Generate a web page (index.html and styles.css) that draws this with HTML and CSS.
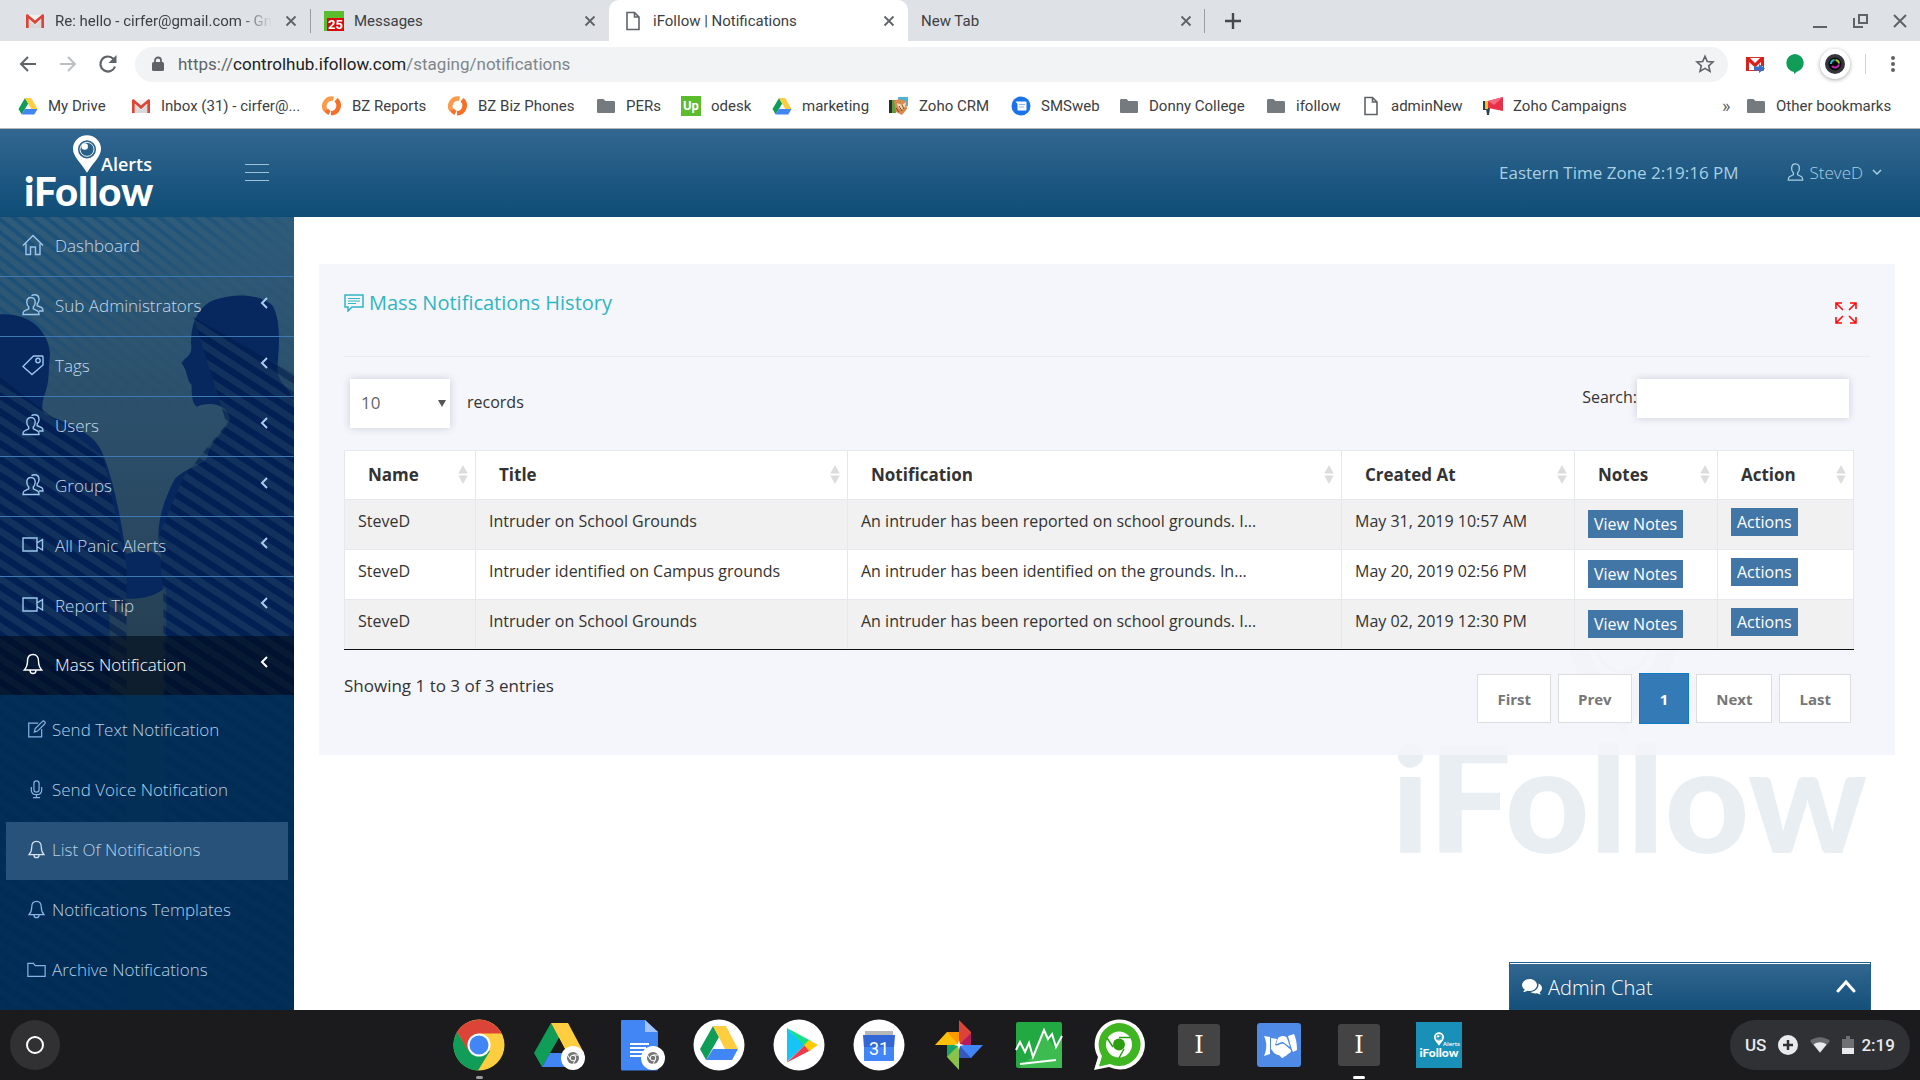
FILE: index.html
```html
<!DOCTYPE html>
<html lang="en">
<head>
<meta charset="utf-8">
<title>iFollow | Notifications</title>
<link rel="stylesheet" href="styles.css">
</head>
<body>
<svg class="defs" aria-hidden="true">
  <defs>
    <symbol id="gmail" viewBox="0 0 20 20"><path fill="#f1f1f1" d="M2 4h16v13H2z"/><path fill="#d9d9d9" d="M4 9l6 5 6-5v8H4z"/><path fill="#db4437" d="M1 17V4.500C1 3.500 2.500 3 3.300 3.700L10 9.600l6.700-5.900C17.500 3 19 3.500 19 4.500V17h-2.700V7.600L10 13.200 3.700 7.600V17z"/></symbol>
    <symbol id="drive" viewBox="0 0 20 20"><path fill="#0f9d58" d="M7 2L.5 13l3.200 5.500L10.200 7.500z"/><path fill="#ffcd40" d="M7 2h6.200l6.300 11h-6.300z"/><path fill="#4285f4" d="M7 13h12.500l-3.200 5.500H3.700z"/></symbol>
    <symbol id="close" viewBox="0 0 20 20"><path d="M5 5l10 10M15 5L5 15" stroke="currentColor" stroke-width="2"/></symbol>
    <symbol id="page" viewBox="0 0 20 20"><path d="M4 1.500h7.500L16 6v12.500H4zM11.500 1.500V6H16" fill="none" stroke="#5f6368" stroke-width="1.600"/></symbol>
    <symbol id="folder" viewBox="0 0 20 20"><path fill="#757a7e" d="M1 4.500C1 3.700 1.500 3 2.300 3h5.200l2 2h8.200c.8 0 1.300.6 1.300 1.300v9.400c0 .8-.5 1.300-1.300 1.300H2.300C1.500 17 1 16.500 1 15.700z"/></symbol>
    <symbol id="bz" viewBox="0 0 20 20"><path d="M3.600 14.500A7.700 7.700 0 0 1 11.500 2.700" fill="none" stroke="#fb9a4b" stroke-width="4.600"/><path d="M14 3.800A7.700 7.700 0 0 1 9 17.300M7.500 17A7.500 7.500 0 0 1 4.200 13.800" fill="none" stroke="#f6702a" stroke-width="4.600"/></symbol>
    <symbol id="users" viewBox="0 0 22 22"><path d="M9 3.500c-3 0-4.200 2.200-4.200 4.800 0 1.700.8 3.600 1.900 4.600v2L2.200 17c-.8.500-1.200 1.200-1.200 3.500h16c0-2.300-.4-3-1.200-3.500l-4.500-2.100v-2c1.100-1 1.900-2.900 1.900-4.600 0-2.600-1.200-4.800-4.200-4.800z"/><path d="M9.500 1.800C10.300 1 11.300.7 12.500.7c3 0 4.500 2.200 4.500 4.700 0 1.800-.8 3.300-1.800 4.300v2l4.500 2c1 .6 1.300 1.500 1.300 3.300h-4"/></symbol>
    <symbol id="user" viewBox="0 0 18 20"><path d="M9 1C6 1 4.700 3.200 4.700 6c0 1.900.8 4 2 5.100V13l-4.500 2.300C1.300 15.900 1 16.800 1 19h16c0-2.200-.3-3.100-1.200-3.700L11.300 13v-1.900c1.200-1.100 2-3.200 2-5.100C13.300 3.200 12 1 9 1z"/></symbol>
    <symbol id="camera" viewBox="0 0 22 22"><path d="M1 4h14v13H1zM15 9l5.500-3.500v10.500L15 12.500"/></symbol>
    <symbol id="bell" viewBox="0 0 22 22"><path d="M11 1.500c-3.800 0-5.500 3-5.500 6.500 0 5-1.200 6.800-3.200 9h17.400c-2-2.200-3.200-4-3.200-9 0-3.500-1.700-6.500-5.500-6.500zM8 17.300c0 1.900 1.200 3.200 3 3.200s3-1.300 3-3.200"/></symbol>
    <symbol id="home" viewBox="0 0 22 22"><path d="M1 11.500L11 1.500l10 10M4 9.500v11h4.500V13h5v7.500H18v-11"/></symbol>
    <symbol id="tag" viewBox="0 0 22 22"><path d="M1 12.500L11.500 2H20.500l.5 1v8L10 20.500z"/><circle cx="16" cy="6.500" r="2.200"/></symbol>
    <symbol id="edit" viewBox="0 0 22 22"><path d="M13 3.500H2v16h15v-9M8.500 14l1-4 8.200-8.200c.8-.8 2-.6 2.700.1s.8 1.900 0 2.700L12.200 12.800z"/></symbol>
    <symbol id="mic" viewBox="0 0 22 22"><rect x="8" y="1" width="6" height="13" rx="3"/><path d="M5 8v3.500c0 3.500 2.500 5.500 6 5.500s6-2 6-5.500V8M11 17v3.500M7 20.500h8"/></symbol>
    <symbol id="outline-folder" viewBox="0 0 22 22"><path d="M1 4h6.500l2 2.500H21V19H1z"/></symbol>
    <symbol id="chevron-left" viewBox="0 0 10 14"><path d="M8 2L3 7l5 5"/></symbol>
    <symbol id="sort" viewBox="0 0 10 20"><path fill="#dcdcdc" d="M5 0l5 9H0zM5 20l5-9H0z"/></symbol>
    <symbol id="pin" viewBox="0 0 30 40"><path fill="currentColor" fill-rule="evenodd" d="M15 0C6.700 0 0 6.500 0 14.500 0 23 8 29 15 40c7-11 15-17 15-25.500C30 6.500 23.300 0 15 0zm0 5.300a9.700 9.700 0 1 1 0 19.400 9.700 9.700 0 0 1 0-19.400z"/><circle cx="15" cy="15" r="7.500" fill="none" stroke="currentColor"/><circle cx="12.500" cy="12" r="3.500" fill="currentColor"/></symbol>
    <symbol id="badge" viewBox="0 0 24 24"><circle cx="12" cy="12" r="12" fill="#fff"/><circle cx="12" cy="12" r="6" fill="#757575"/><circle cx="12" cy="12" r="2.800" fill="#757575" stroke="#fff"/><path d="M12 9h5.500M9.300 13.500l-2.800-4.500M14.500 13.500l-2.500 4.500" stroke="#fff"/></symbol>
    <pattern id="blinds" width="40" height="40" patternUnits="userSpaceOnUse" patternTransform="rotate(33)"><rect width="40" height="20" fill="#001b4c" opacity=".75"/><rect y="20" width="40" height="20" fill="#1c3d5c" opacity=".6"/></pattern>
    <pattern id="facade" width="30" height="30" patternUnits="userSpaceOnUse" patternTransform="rotate(38)"><rect width="30" height="12" fill="#0d4a7c" opacity=".6"/></pattern>
    <linearGradient id="sky" x2="0" y2="1"><stop offset="0" stop-color="#2f5c7a"/><stop offset=".4" stop-color="#2a4861"/><stop offset=".6" stop-color="#233c4c"/><stop offset="1" stop-color="#0e2f4d"/></linearGradient>
    <linearGradient id="fade" x2="1" y2="1"><stop offset="0" stop-color="#fff"/><stop offset=".35" stop-color="#fff" stop-opacity=".7"/><stop offset=".55" stop-color="#fff" stop-opacity=".1"/></linearGradient>
    <mask id="facade-mask"><path fill="url(#fade)" d="M0 0h882v560H0z"/></mask>
  </defs>
</svg>

<div class="window">
  <header class="tabs">
    <div class="tab"><svg class="ico"><use href="#gmail"/></svg><span class="tab-title tab-title-fade">Re: hello - cirfer@gmail.com - Gmail</span><button class="x" aria-label="Close tab"><svg><use href="#close"/></svg></button></div>
    <div class="tab tab-line"><span class="count">25</span><span class="tab-title">Messages</span><button class="x" aria-label="Close tab"><svg><use href="#close"/></svg></button></div>
    <div class="tab tab-active"><svg class="ico"><use href="#page"/></svg><span class="tab-title">iFollow | Notifications</span><button class="x" aria-label="Close tab"><svg><use href="#close"/></svg></button></div>
    <div class="tab tab-plain"><span class="tab-title">New Tab</span><button class="x" aria-label="Close tab"><svg><use href="#close"/></svg></button></div>
    <button class="new-tab" aria-label="New tab"><svg viewBox="0 0 16 16"><path d="M8 0v16M0 8h16" stroke="#45494d" stroke-width="2.400"/></svg></button>
    <div class="controls">
      <button aria-label="Minimize"><svg viewBox="0 0 20 20"><path d="M3 16h14" stroke="#5f6368" stroke-width="2"/></svg></button>
      <button aria-label="Restore"><svg viewBox="0 0 20 20"><path d="M9 4h8v8H9zM4 7v9h9" fill="none" stroke="#5f6368" stroke-width="2"/></svg></button>
      <button aria-label="Close window"><svg viewBox="0 0 20 20"><path d="M4 4l12 12M16 4L4 16" stroke="#5f6368" stroke-width="2"/></svg></button>
    </div>
  </header>

  <div class="toolbar">
    <button aria-label="Back"><svg viewBox="0 0 20 20"><path d="M18 10H3M10 3l-7 7 7 7" fill="none" stroke="#5f6368" stroke-width="2"/></svg></button>
    <button aria-label="Forward"><svg viewBox="0 0 20 20"><path d="M2 10h15M10 3l7 7-7 7" fill="none" stroke="#bdc0c3" stroke-width="2"/></svg></button>
    <button aria-label="Reload"><svg viewBox="0 0 20 20"><path d="M17 12.500A7.500 7.500 0 1 1 15.500 5" fill="none" stroke="#5f6368" stroke-width="2.200"/><path d="M18.500 1v8h-8z" fill="#5f6368"/></svg></button>
    <div class="omnibox">
      <svg class="lock" viewBox="0 0 12 16"><path d="M3 7V4.500a3 3 0 0 1 6 0V7" fill="none" stroke="#5f6368" stroke-width="1.800"/><rect y="6" width="12" height="9" rx="1.500" fill="#5f6368"/></svg>
      <p class="url">https://<b>controlhub.ifollow.com</b><span>/staging/notifications</span></p>
      <button aria-label="Bookmark"><svg viewBox="0 0 20 20"><path d="M10 2.200l2.300 5.300 5.700.5-4.300 3.800 1.300 5.600-5-3-5 3 1.300-5.600L2 8l5.700-.5z" fill="none" stroke="#5f6368" stroke-width="1.600"/></svg></button>
    </div>
    <div class="extensions">
      <svg viewBox="0 0 20 20"><path fill="#fff" stroke="#c33" d="M1.500 3.500h17v13h-17z"/><path fill="#d9201a" d="M1 17V3h3l6 6 6-6h3v9h-3V8l-6 5.500L4 8v9z"/><path fill="#3a6fc9" d="M9 12.500h5V10l6 4.500-6 4.500v-2.500H9z"/></svg>
      <svg viewBox="0 0 20 20"><path fill="#0f9d58" d="M10 0a9 9 0 0 0-1 17.900V20l3-2.300A9 9 0 0 0 10 0z"/></svg>
      <svg class="avatar" viewBox="0 0 30 30"><circle cx="15" cy="15" r="15" fill="#fff"/><circle cx="15" cy="15" r="10" fill="#35363d"/><circle cx="15" cy="15" r="6.500" fill="#08080b"/><path d="M11 15a4 4 0 0 1 3.500-4" fill="none" stroke="#22b8c9" stroke-width="2"/><path d="M15.500 11a4 4 0 0 1 3.500 3.500" fill="none" stroke="#9ec928" stroke-width="2"/><path d="M19 15.500a4 4 0 0 1-7 1.500" fill="none" stroke="#c42cb0" stroke-width="2"/></svg>
      <button class="more" aria-label="Menu"><svg viewBox="0 0 20 20"><g fill="#5f6368"><circle cx="10" cy="4" r="2"/><circle cx="10" cy="10" r="2"/><circle cx="10" cy="16" r="2"/></g></svg></button>
    </div>
  </div>

  <nav class="bookmarks" aria-label="Bookmarks">
    <a href="#"><svg><use href="#drive"/></svg>My Drive</a>
    <a href="#"><svg><use href="#gmail"/></svg>Inbox (31) - cirfer@...</a>
    <a href="#"><svg><use href="#bz"/></svg>BZ Reports</a>
    <a href="#"><svg><use href="#bz"/></svg>BZ Biz Phones</a>
    <a href="#"><svg><use href="#folder"/></svg>PERs</a>
    <a href="#"><span class="up">Up</span>odesk</a>
    <a href="#"><svg><use href="#drive"/></svg>marketing</a>
    <a href="#"><svg viewBox="0 0 20 20"><path fill="#5e9f3c" d="M0 4h7v13H0z"/><path fill="#2b2b2b" d="M0 4h3v13H0z"/><path fill="#4bb3d8" d="M9 1h10v9h-9z"/><path fill="#d98a52" d="M5 5l5-2 7 2 1 8-5 6-6-3z"/><path fill="#f4d9b5" d="M8 7l5 2 4-3-1 5-4 3-3-3z"/><path stroke="#7d3d1f" d="M7 12l3 4M10 10l3 5M13 9l2 4"/></svg>Zoho CRM</a>
    <a href="#"><svg viewBox="0 0 20 20"><circle cx="10" cy="10" r="9.500" fill="#1a73e8"/><path fill="#fff" d="M4.500 5.500h10c.8 0 1 .4 1 1v7c0 .6-.3 1-1 1h-7c-.7 0-1-.4-1-1V8z"/><path stroke="#8ab4f8" d="M8 8.500h6M8 11h5"/></svg>SMSweb</a>
    <a href="#"><svg><use href="#folder"/></svg>Donny College</a>
    <a href="#"><svg><use href="#folder"/></svg>ifollow</a>
    <a href="#"><svg><use href="#page"/></svg>adminNew</a>
    <a href="#"><svg viewBox="0 0 20 20"><path fill="#2d3e50" d="M0 5h3v9H0zM3 12h4l-1 7H4z"/><path fill="#f5c518" d="M2 5h3v8H2z"/><path fill="#e8304a" d="M5 5l15-4v14L5 12z"/><path fill="#f4697b" d="M5 5l15-4-9 8z"/></svg>Zoho Campaigns</a>
    <button class="overflow" aria-label="More bookmarks">»</button>
    <a href="#"><svg><use href="#folder"/></svg>Other bookmarks</a>
  </nav>

  <div class="app">
    <header class="topbar">
      <a href="#" class="logo" aria-label="iFollow Alerts">
        <span class="logo-top"><svg class="logo-pin"><use href="#pin"/></svg>Alerts</span>
        <span class="logo-word">iFollow</span>
      </a>
      <button class="burger" aria-label="Toggle menu"><i></i><i></i><i></i></button>
      <p class="clock">Eastern Time Zone 2:19:16 PM</p>
      <button class="account"><svg class="line"><use href="#user"/></svg>SteveD<svg class="caret" viewBox="0 0 10 10"><path d="M1 3l4 4 4-4" fill="none" stroke="currentColor" stroke-width="1.500"/></svg></button>
    </header>

    <div class="body">
      <aside class="sidebar">
        <svg class="scene" viewBox="0 0 882 2379" preserveAspectRatio="xMidYMin slice" aria-hidden="true">
          <rect width="882" height="2379" fill="url(#sky)"/>
          <rect width="882" height="560" fill="url(#facade)" mask="url(#facade-mask)"/>
          <path fill="#07285f" d="M0 292c90-5 145 50 150 118-6 50 0 70-12 110-10 30-16 50-6 70 100 40 160 65 180 130 30 80 50 180 66 290l60-10c60 10 70 60 60 110-40 40-120 40-170 30l5 1229H0z"/>
          <path fill="#07285f" d="M640 250c80-30 160-10 180 20 20 40 20 100 12 180-2 60 50 60 50 120v1800H490c0-400 5-1000 10-1230l-25-180c0-60 20-120 50-175 50-45 100-40 100-80 15-40 50-60 65-100-10-50-70-50-100-36-15-10-15-40-15-65-15-10-10-40-30-65 10-20 35-20 28-60 0-80 35-115 67-129z"/>
          <path fill="url(#blinds)" opacity=".8" d="M0 480l130 100 180 140 70 330v1329H0zM580 300l302 170v1909H490V1140L475 960l75-180 130-160z"/>
        </svg>
        <nav class="menu">
          <a href="#"><svg class="line"><use href="#home"/></svg>Dashboard</a>
          <a href="#"><svg class="line"><use href="#users"/></svg>Sub Administrators<svg class="arrow"><use href="#chevron-left"/></svg></a>
          <a href="#"><svg class="line"><use href="#tag"/></svg>Tags<svg class="arrow"><use href="#chevron-left"/></svg></a>
          <a href="#"><svg class="line"><use href="#users"/></svg>Users<svg class="arrow"><use href="#chevron-left"/></svg></a>
          <a href="#"><svg class="line"><use href="#users"/></svg>Groups<svg class="arrow"><use href="#chevron-left"/></svg></a>
          <a href="#"><svg class="line"><use href="#camera"/></svg>All Panic Alerts<svg class="arrow"><use href="#chevron-left"/></svg></a>
          <a href="#" class="last"><svg class="line"><use href="#camera"/></svg>Report Tip<svg class="arrow"><use href="#chevron-left"/></svg></a>
          <a href="#" class="open"><svg class="line"><use href="#bell"/></svg>Mass Notification<svg class="arrow"><use href="#chevron-left"/></svg></a>
        </nav>
        <nav class="submenu">
          <a href="#"><svg class="line"><use href="#edit"/></svg>Send Text Notification</a>
          <a href="#"><svg class="line"><use href="#mic"/></svg>Send Voice Notification</a>
          <a href="#" class="current"><svg class="line"><use href="#bell"/></svg>List Of Notifications</a>
          <a href="#"><svg class="line"><use href="#bell"/></svg>Notifications Templates</a>
          <a href="#"><svg class="line"><use href="#outline-folder"/></svg>Archive Notifications</a>
        </nav>
      </aside>

      <main class="content">
        <div class="watermark" aria-hidden="true">
          <span class="mark-top"><svg class="mark-pin"><use href="#pin"/></svg>Alerts</span>
          <span class="mark-word">iFollow</span>
        </div>
        <section class="panel">
          <div class="panel-head">
            <h1><svg viewBox="0 0 20 18"><path d="M1 1h18v12H8l-4 4v-4H1z" fill="none" stroke="currentColor" stroke-width="1.500"/><path d="M4 4.500h12M4 7h12M4 9.500h8" stroke="currentColor"/></svg>Mass Notifications History</h1>
            <button class="expand" aria-label="Full screen"><svg viewBox="0 0 22 22"><path d="M1 7V1h6M1 1l7 7M15 1h6v6M21 1l-7 7M1 15v6h6M1 21l7-7M15 21h6v-6M21 21l-7-7" fill="none" stroke="#fb0d0d" stroke-width="1.600"/></svg></button>
          </div>
          <div class="filters">
            <div class="length"><span class="select"><select id="length"><option>10</option><option>25</option></select></span><label for="length">records</label></div>
            <div class="search"><label for="search">Search:</label><input id="search" type="text"></div>
          </div>
          <table>
            <colgroup><col class="c-name"><col class="c-title"><col><col class="c-date"><col class="c-notes"><col class="c-action"></colgroup>
            <thead><tr>
              <th><span>Name<svg><use href="#sort"/></svg></span></th>
              <th><span>Title<svg><use href="#sort"/></svg></span></th>
              <th><span>Notification<svg><use href="#sort"/></svg></span></th>
              <th><span>Created At<svg><use href="#sort"/></svg></span></th>
              <th><span>Notes<svg><use href="#sort"/></svg></span></th>
              <th><span>Action<svg><use href="#sort"/></svg></span></th>
            </tr></thead>
            <tbody>
              <tr><td>SteveD</td><td>Intruder on School Grounds</td><td>An intruder has been reported on school grounds. I...</td><td>May 31, 2019 10:57 AM</td><td><button>View Notes</button></td><td class="action"><button>Actions</button></td></tr>
              <tr><td>SteveD</td><td>Intruder identified on Campus grounds</td><td>An intruder has been identified on the grounds. In...</td><td>May 20, 2019 02:56 PM</td><td><button>View Notes</button></td><td class="action"><button>Actions</button></td></tr>
              <tr><td>SteveD</td><td>Intruder on School Grounds</td><td>An intruder has been reported on school grounds. I...</td><td>May 02, 2019 12:30 PM</td><td><button>View Notes</button></td><td class="action"><button>Actions</button></td></tr>
            </tbody>
          </table>
          <div class="panel-foot">
            <p>Showing 1 to 3 of 3 entries</p>
            <nav class="pager" aria-label="Pages"><button>First</button><button>Prev</button><button class="on">1</button><button>Next</button><button>Last</button></nav>
          </div>
        </section>
        <button class="chat">
          <svg class="bubbles" viewBox="0 0 20 17"><path fill="#fff" d="M7.500 0C3.400 0 0 2.700 0 6c0 1.900 1.100 3.500 2.800 4.600-.3.900-.9 1.700-1.700 2.400 1.700-.1 3.200-.6 4.300-1.300.7.200 1.400.3 2.100.3 4.100 0 7.500-2.700 7.500-6S11.600 0 7.500 0z"/><path fill="#fff" d="M16.500 4.500C18.600 5.500 20 7.200 20 9.200c0 1.600-.9 3-2.400 4 .3.900.8 1.600 1.600 2.300-1.600-.1-3-.5-4.100-1.200-2.400.4-5-.1-6.700-1.300 4.700-.2 8.600-3.500 8.100-8.500z"/></svg>
          Admin Chat
          <svg class="up-arrow" viewBox="0 0 20 14"><path d="M2 12l8-9 8 9" fill="none" stroke="#fff" stroke-width="3" stroke-linecap="round"/></svg>
        </button>
      </main>
    </div>
  </div>

  <footer class="shelf">
    <button class="launcher" aria-label="Launcher"><i></i></button>
    <nav class="apps" aria-label="Apps">
      <button class="running dim" aria-label="Chrome"><svg viewBox="0 0 52 52"><circle cx="26" cy="26" r="25.500" fill="#ffcd40"/><path fill="#db4437" d="M26 26L4 13A25.500 25.500 0 0 1 48.500 14.500H26z"/><path fill="#0f9d58" d="M4 13A25.500 25.500 0 0 0 25 51.500L37 32 26 26 15.500 31z"/><path fill="#db4437" d="M4 13l11.500 19L26 14.500z"/><circle cx="26" cy="26" r="11.500" fill="#fff"/><circle cx="26" cy="26" r="9.500" fill="#4285f4"/></svg></button>
      <button aria-label="Drive"><svg viewBox="0 0 52 52"><path fill="#0f9d58" d="M18 4L1 34l8 14 17-29z"/><path fill="#ffcd40" d="M18 4h17l16 30H34z"/><path fill="#4285f4" d="M17 34h34l-8 14H9z"/><path fill="#1b1b1d" d="M26 19l8 15H17.500z"/><use href="#badge" x="28" y="27" width="24" height="24"/></svg></button>
      <button aria-label="Docs"><svg viewBox="0 0 52 52"><path fill="#4285f4" d="M9 1h23l13 12v37c0 1-.6 1.500-1.500 1.500h-34C8.500 51.500 8 51 8 50V2.500C8 1.600 8.300 1 9 1z"/><path fill="#a1c2fa" d="M32 1l13 12H32z"/><path stroke="#fff" stroke-width="2" d="M17 25h19M17 29h16M17 33h19M17 37h14"/><use href="#badge" x="28" y="27" width="24" height="24"/></svg></button>
      <button aria-label="Google Drive"><svg viewBox="0 0 52 52"><circle cx="26" cy="26" r="25.500" fill="#fff"/><path fill="#0f9d58" d="M20 7L7 30l6 11 13-23z"/><path fill="#ffcd40" d="M20 7h13l12 23H32z"/><path fill="#4285f4" d="M20 30h25l-6 11H13z"/></svg></button>
      <button aria-label="Play Store"><svg viewBox="0 0 52 52"><circle cx="26" cy="26" r="25.500" fill="#fff"/><path fill="#16c5f5" d="M14 9v34l18-17z"/><path fill="#12e188" d="M14 9l24 13-6 5z"/><path fill="#ee3a4c" d="M14 43.500L38 31l-6-5z"/><path fill="#ffc907" d="M36 21l9 5-9 6-5-6z"/></svg></button>
      <button aria-label="Calendar"><svg viewBox="0 0 52 52"><circle cx="26" cy="26" r="25.500" fill="#fff"/><path fill="#b8b8b8" d="M12 12h28v5H12z"/><path fill="#3367d6" d="M10 16h32l-1 13H11z"/><path fill="#4285f4" d="M11 28h30v13c0 .7-.5 1-1 1H12c-.6 0-1-.3-1-1z"/><text x="26" y="36" text-anchor="middle" class="cal">31</text></svg></button>
      <button aria-label="Photos"><svg viewBox="0 0 52 52"><path fill="#db4437" d="M26 1l12 12v13H26z"/><path fill="#b31b5d" d="M26 26l12-12v12z"/><path fill="#ffc107" d="M2 26l12-13h12v13z"/><path fill="#ff9800" d="M14 13h12v13z"/><path fill="#8bc34a" d="M26 51L14 38V26h12z"/><path fill="#16a765" d="M14 26h12L14 38z"/><path fill="#4285f4" d="M50 26L38 39H26V26z"/><path fill="#3457c0" d="M26 26l12 13H26z"/><path fill="#fff" d="M26 21l1 4 4 1-4 1-1 4-1-4-4-1 4-1z"/></svg></button>
      <button aria-label="Stocks"><svg viewBox="0 0 52 52"><rect x="3" y="3" width="46" height="46" rx="2" fill="#22a941"/><path fill="#3dbb50" d="M19 38L30 12l6 9 6 8 7-11v31H6z"/><path d="M3 31l4-8 5 10 4-9 4 14 11-27 4 9 4-5 4 13 6-11M7 45l36-4" fill="none" stroke="#fff" stroke-width="2"/></svg></button>
      <button aria-label="Messaging"><svg viewBox="0 0 52 52"><path fill="#fff" d="M26 .5a25 25 0 1 1-10 47.500L1 51l4-13A25 25 0 0 1 26 .5z"/><path fill="#40b522" d="M26 4a21.500 21.500 0 1 1-9 41L6 47.500 9 37A21.500 21.500 0 0 1 26 4z"/><circle cx="26" cy="25.500" r="13" fill="#fff"/><circle cx="26" cy="25.500" r="6" fill="#2b9e12"/><path d="M26 18.500h11M20 28l-6-9M31 30l-5 9" stroke="#2b9e12" stroke-width="1.500"/></svg></button>
      <button aria-label="Text app"><svg viewBox="0 0 52 52"><rect x="5" y="5" width="42" height="42" rx="3" fill="#444"/><text x="26" y="34" text-anchor="middle" class="serif-i">I</text></svg></button>
      <button aria-label="Partners"><svg viewBox="0 0 52 52"><rect x="4" y="4" width="44" height="44" rx="3" fill="#4f8ae6"/><path fill="#fff" d="M11 17l6 1v17l-6 2c3-7 3-14 0-20zM41 15l-6 2c2 7 3 11 5 16l4-2c0-6-1-12-3-16zM18 19l6 1-2 6c3 2 5-2 9-1l7 6c0 4-3 3-4 5-2 2-3 1-4 3-3 0-2-3-5-3-4-1-5-4-7-6z"/><path fill="#fff" d="M25 19c4-3 8-2 9 0l3 9-7-5c-3 0-5 2-7 2z"/></svg></button>
      <button class="running" aria-label="Text app window"><svg viewBox="0 0 52 52"><rect x="5" y="5" width="42" height="42" rx="3" fill="#444"/><text x="26" y="34" text-anchor="middle" class="serif-i">I</text></svg></button>
      <button aria-label="iFollow"><svg viewBox="0 0 52 52"><path fill="#1890b8" d="M3 3h46v46H3z"/><g color="#fff"><use href="#pin" x="21" y="13" width="10" height="14"/></g><text x="30" y="27" class="tile-small">Alerts</text><text x="26" y="38" text-anchor="middle" class="tile-word">iFollow</text></svg></button>
    </nav>
    <button class="status">US
      <svg viewBox="0 0 20 20"><circle cx="10" cy="10" r="10" fill="#e8eaed"/><path d="M10 5v10M5 10h10" stroke="#303134" stroke-width="2.500"/></svg>
      <svg viewBox="0 0 20 20"><path fill="#6a6b6d" d="M0 6c6-5 14-5 20 0L10 18z"/><path fill="#e8eaed" d="M3.500 9.500c4-3 9-3 13 0L10 17.500z"/></svg>
      <span class="time"><svg class="battery" viewBox="0 0 12 20"><path fill="#6f7072" d="M4 1h4v3h4v15H0V4h4z"/><path fill="#e8eaed" d="M0 13h12v6H0z"/></svg>2:19</span></button>
  </footer>
</div>
</body>
</html>
```
FILE: styles.css
```css
* { box-sizing: border-box; }
body { margin: 0; font-family: "Open Sans", "Noto Sans", sans-serif; font-size: 16px; color: #333; }
h1, p { margin: 0; font-weight: 400; }
a { color: inherit; text-decoration: none; }
button { padding: 0; border: 0; background: none; font: inherit; color: inherit; }
svg { display: block; flex: none; }
.defs { position: absolute; width: 0; height: 0; }
.window { display: flex; flex-direction: column; min-height: 100vh; background: #fff; }

/* browser chrome */
.tabs, .toolbar, .bookmarks, .shelf { font-family: Roboto, sans-serif; color: #3c4043; }
.tabs { display: grid; grid-template-columns: 310px 299px 299px 297px 56px 1fr; height: 41px; background: #dee1e6; font-size: 15px; }
.tab { display: flex; align-items: center; gap: 10px; padding: 0 10px 0 14px; min-width: 0; }
.tab:first-child { padding-left: 25px; }
.tab .ico { width: 20px; height: 20px; }
.tab-title { flex: 1; min-width: 0; overflow: hidden; white-space: nowrap; }
.tab-title-fade { -webkit-mask-image: linear-gradient(90deg, #000 85%, transparent); mask-image: linear-gradient(90deg, #000 85%, transparent); }
.tab-line { position: relative; }
.tab-line::before, .tab-plain::after { content: ""; position: absolute; left: 0; top: 9px; width: 1px; height: 24px; background: #9a9da1; }
.tab-plain { position: relative; padding-left: 13px; }
.tab-plain::after { left: auto; right: 0; }
.tab-active { background: #fff; border-radius: 10px 10px 0 0; }
.x svg { width: 18px; height: 18px; color: #5f6368; }
.count { width: 20px; height: 20px; padding: 7px 0 0 4px; background: linear-gradient(90deg, #5bbc2e 3px, transparent 3px), linear-gradient(#5bbc2e 7px, #d80b0b 7px); color: #fff; font-size: 13px; line-height: 13px; font-weight: 700; }
.new-tab svg { width: 16px; height: 16px; margin: 0 auto; }
.controls { display: flex; justify-content: flex-end; align-items: center; gap: 20px; padding-right: 10px; }
.controls svg { width: 20px; height: 20px; }

.toolbar { display: flex; align-items: center; height: 46px; padding: 0 17px 0 18px; gap: 20px; }
.toolbar svg { width: 20px; height: 20px; }
.omnibox { display: flex; align-items: center; flex: 1; height: 35px; padding: 0 13px 0 17px; margin: 0 -3px; border-radius: 18px; background: #f1f3f4; }
.omnibox .lock { width: 12px; height: 16px; }
.url { flex: 1; padding-left: 14px; font-size: 17px; color: #5f6368; }
.url b { font-weight: 400; color: #202124; }
.url span { color: #80868b; }
.extensions { display: flex; align-items: center; gap: 20px; }
.extensions .avatar { width: 30px; height: 30px; margin: 0 -5px; border-radius: 50%; box-shadow: 0 1px 4px rgba(0,0,0,.35); }
.more { padding-left: 17px; border-left: 1px solid #d0d2d5; }

.bookmarks { display: grid; grid-template-columns: 113px 191px 126px 148px 85px 91px 117px 122px 108px 147px 95px 122px 1fr 30px 174px; align-items: center; height: 42px; padding: 0 0 4px 18px; border-bottom: 1px solid #b4b6ba; font-size: 15px; white-space: nowrap; }
.bookmarks a { display: flex; align-items: center; gap: 10px; }
.bookmarks svg { width: 20px; height: 20px; }
.up { width: 20px; height: 20px; background: #5bbc2e; color: #fff; font-size: 13px; line-height: 20px; font-weight: 700; text-align: center; }
.overflow { justify-self: start; margin-left: 6px; font-size: 18px; color: #5f6368; }

/* application */
.app { display: flex; flex-direction: column; flex: 1; }
.topbar { display: flex; align-items: center; height: 88px; padding: 0 38px 2px 24px; background: linear-gradient(#326790, #0e4c76); color: #a9d0e2; }
.logo { width: 221px; color: #fff; }
.logo-top { display: flex; align-items: flex-end; height: 38px; padding-left: 49px; font-size: 18px; line-height: 18px; font-weight: 600; }
.logo-pin { width: 28px; height: 38px; }
.logo-word { display: block; font-family: Lato, sans-serif; font-weight: 900; font-size: 40px; line-height: 36px; }
.burger { display: grid; gap: 7px; width: 24px; }
.burger i { height: 1px; background: #9dc0d6; }
.clock { margin-left: auto; font-size: 17px; }
.account { display: flex; align-items: center; margin-left: 48px; font-size: 17px; font-weight: 300; }
.line { fill: none; stroke: currentColor; stroke-width: 1.400; }
.account .line { width: 17px; height: 18px; margin-right: 6px; }
.caret { width: 10px; height: 10px; margin-left: 9px; }

.body { display: flex; flex: 1; }
.sidebar { position: relative; display: flex; flex-direction: column; width: 294px; overflow: hidden; background: #0a2d52; color: #c3d9ec; font-size: 17px; font-weight: 300; }
.scene { position: absolute; inset: 0; width: 100%; height: 100%; }
.menu, .submenu { position: relative; }
.menu a { display: flex; align-items: center; gap: 11px; height: 60px; padding: 0 25px 3px 22px; border-bottom: 1px solid #3d7ab5; }
.menu .line { width: 22px; height: 22px; color: #9cc6ee; }
.menu .arrow { width: 10px; height: 14px; margin: 0 0 5px auto; fill: none; stroke: #a9cdf0; stroke-width: 2; }
.menu .last, .menu .open { height: 59px; border-bottom: 0; }
.menu .open { background: rgba(0,10,25,.6); color: #fff; }
.menu .open .line { color: #fff; }
.menu .open .arrow { stroke: #fff; }
.submenu { display: grid; align-content: start; gap: 2px; flex: 1; padding: 7px 6px 10px; background: rgba(0,46,86,.88); color: #b4d0ea; }
.submenu a { display: flex; align-items: center; gap: 6px; height: 58px; padding: 0 0 3px 21px; }
.submenu .line { width: 19px; height: 19px; color: #86b4e4; }
.submenu .current { background: #285279; }
.submenu .current .line { color: #d5e5f5; }

.content { position: relative; flex: 1; min-width: 0; padding: 47px 25px 20px; }
.panel { position: relative; padding: 0 25px 31px; background: rgba(243,245,250,.85); }
.panel-head { display: flex; justify-content: space-between; height: 93px; padding: 25px 13px 0 0; border-bottom: 1px solid #e9ebee; color: #2fb5c3; }
.panel h1 { display: flex; gap: 5px; font-size: 20px; line-height: 28px; }
.panel h1 svg { width: 20px; height: 18px; margin-top: 5px; }
.expand { align-self: flex-start; padding-top: 13px; }
.expand svg { width: 22px; height: 22px; }
.filters { display: flex; justify-content: space-between; padding: 22px 21px 22px 6px; }
.length { display: flex; gap: 17px; line-height: 46px; }
.select { position: relative; width: 100px; height: 49px; background: #fff; box-shadow: 0 0 8px rgba(40,40,70,.2); }
.select::after { content: ""; position: absolute; right: 4px; top: 21px; border: 4px solid transparent; border-top: 7px solid #555; border-bottom: 0; }
.select select { display: block; width: 100%; height: 100%; padding: 0 11px 2px; border: 0; background: none; appearance: none; font: inherit; font-size: 17px; color: #666; }
.search { display: flex; line-height: 37px; }
.search input { width: 212px; height: 39px; border: 0; background: #fff; box-shadow: 0 0 8px rgba(40,40,70,.2); font: inherit; }

table { width: calc(100% - 16px); table-layout: fixed; border-collapse: collapse; background: #fff; }
.c-name { width: 131px; }
.c-title { width: 372px; }
.c-date { width: 233px; }
.c-notes { width: 143px; }
.c-action { width: 136px; }
th, td { border: 1px solid #e5e9ed; text-align: left; }
th { height: 49px; padding: 0 7px 1px 23px; font-size: 17px; font-weight: 700; }
th span { display: flex; justify-content: space-between; align-items: center; }
th svg { width: 10px; height: 19px; }
td { height: 50px; padding: 10px 0 0 13px; line-height: 22px; vertical-align: top; white-space: nowrap; }
td button { display: block; height: 28px; padding: 0 6px; background: #4276a6; color: #fff; }
td.action { padding-top: 8px; }
tbody tr:last-child td { border-bottom: 1px solid #111; }
tbody tr:nth-child(odd) { background: #f1f1f1; }
.panel-foot { display: flex; justify-content: space-between; padding: 23px 19px 0 0; }
.panel-foot p { line-height: 26px; font-size: 17px; }
.pager { display: flex; gap: 7px; align-items: center; }
.pager button { height: 49px; padding: 0 19px; border: 1px solid #ddd; background: #fff; color: #777; font-size: 15px; font-weight: 700; }
.pager .on { height: 51px; padding: 0 20px; border-color: #0c7cc4; background: #337ab7; color: #fff; }

.watermark { position: absolute; right: 53px; top: 373px; color: #e8eef2; }
.mark-top { display: flex; align-items: flex-end; height: 145px; margin-bottom: -14px; padding-left: 178px; font-size: 58px; line-height: 70px; font-weight: 700; }
.mark-pin { width: 108px; height: 145px; }
.mark-word { display: block; font-family: Lato, sans-serif; font-weight: 900; font-size: 147px; line-height: 150px; }
.chat { position: absolute; right: 49px; bottom: 0; display: flex; align-items: center; gap: 6px; width: 362px; height: 48px; padding: 2px 14px 0 12px; border: 1px solid #20608f; border-bottom: 0; background: linear-gradient(#fff 1px, #326790 1px, #14507a); color: #fff; font-size: 20px; font-weight: 300; }
.bubbles { width: 20px; height: 17px; }
.up-arrow { width: 20px; height: 14px; margin: 0 0 4px auto; }

/* shelf */
.shelf { display: flex; align-items: center; justify-content: space-between; height: 70px; padding: 0 10px; background: #1b1b1d; color: #e8eaed; }
.launcher { display: grid; place-items: center; width: 50px; height: 50px; border-radius: 50%; background: #313134; }
.launcher i { width: 18px; height: 18px; border: 2px solid #fff; border-radius: 50%; }
.apps { display: flex; margin-left: 128px; }
.apps button { position: relative; width: 80px; }
.apps svg { width: 52px; height: 52px; margin: 0 auto; }
.running::after { content: ""; position: absolute; left: 34px; bottom: -8px; width: 12px; height: 3px; border-radius: 2px; background: #fff; }
.dim::after { left: 37px; width: 7px; background: #9a9a9c; }
.cal { font: 18px Roboto, sans-serif; fill: #fff; }
.serif-i { font: 24px "DejaVu Serif", serif; fill: #fff; }
.tile-small { font: 600 6px "Open Sans", sans-serif; fill: #fff; }
.tile-word { font: 900 12px Lato, sans-serif; fill: #fff; }
.status { display: flex; align-items: center; gap: 12px; width: 180px; height: 50px; padding: 0 15px; border-radius: 25px; background: #303134; font-size: 17px; font-weight: 500; }
.status svg { width: 20px; height: 20px; }
.time { display: flex; gap: 7px; align-items: center; }
.status .battery { width: 12px; }
```
